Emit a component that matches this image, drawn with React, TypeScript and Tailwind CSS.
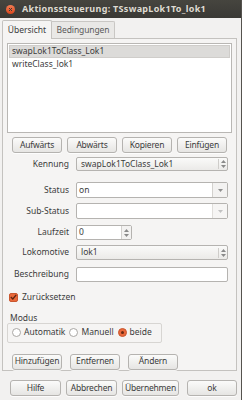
import React from 'react';

const font = { fontFamily: '"Noto Sans", "DejaVu Sans", sans-serif' };

function Btn({ label, w = 'w-[50px]' }: { label: string; w?: string }) {
  return (
    <div
      className={`${w} h-[16px] flex items-center justify-center rounded-[3px] border border-[#b5b3b0] bg-gradient-to-b from-[#fbfbfa] to-[#e6e5e3] text-[8.5px] tracking-[-0.2px] text-[#3c3c3c] shadow-[0_1px_0_rgba(255,255,255,0.8)] whitespace-nowrap`}
    >
      {label}
    </div>
  );
}

function UpDown() {
  return (
    <div className="flex flex-col items-center leading-none">
      <svg width="5" height="3" viewBox="0 0 5 3">
        <path d="M0 3 L2.5 0 L5 3 Z" fill="#8a8a8a" />
      </svg>
      <svg width="5" height="3" viewBox="0 0 5 3" className="mt-[2px]">
        <path d="M0 0 L2.5 3 L5 0 Z" fill="#8a8a8a" />
      </svg>
    </div>
  );
}

function Row({ label, children, mt }: { label: string; children: React.ReactNode; mt: string }) {
  return (
    <div className={`flex items-center ${mt}`}>
      <div className="w-[62px] text-right text-[8.5px] text-[#3c3c3c]">{label}</div>
      <div className="ml-[7px] flex-1 flex">{children}</div>
    </div>
  );
}

function Radio({ label, on }: { label: string; on?: boolean }) {
  return (
    <div className="flex items-center gap-[3px]">
      {on ? (
        <div className="w-[9px] h-[9px] rounded-full bg-[#e9683a] border border-[#c9572f] flex items-center justify-center">
          <div className="w-[3px] h-[3px] rounded-full bg-[#6a2a12]" />
        </div>
      ) : (
        <div className="w-[9px] h-[9px] rounded-full bg-white border border-[#a9a7a4]" />
      )}
      <span className="text-[8.5px] text-[#3c3c3c]">{label}</span>
    </div>
  );
}

export default function App() {
  return (
    <div className="w-[242px] h-[400px] bg-[#f2f1f0] flex flex-col overflow-hidden border-r border-[#55534f]" style={font}>
      {/* title bar */}
      <div className="h-[18px] bg-gradient-to-b from-[#46453f] to-[#3a3935] flex items-center pl-[6px]">
        <div className="w-[9px] h-[9px] rounded-full bg-gradient-to-b from-[#f37b51] to-[#d9461b] flex items-center justify-center">
          <svg width="5" height="5" viewBox="0 0 5 5">
            <path d="M1 1 L4 4 M4 1 L1 4" stroke="#3c3b37" strokeWidth="1" />
          </svg>
        </div>
        <span className="ml-[7px] text-[9px] font-bold text-[#dfdbd2] tracking-[0.3px]">Aktionssteuerung: TSswapLok1To_lok1</span>
      </div>

      {/* tabs */}
      <div className="flex items-end pl-[2px] mt-[1px] h-[19px]">
        <div className="h-[19px] w-[50px] border border-b-0 border-[#c4c2bf] rounded-t-[2px] bg-[#f5f4f3] flex items-center justify-center text-[8.5px] text-[#3c3c3c] relative z-10 -mb-px">
          Übersicht
        </div>
        <div className="h-[17px] w-[63px] border border-b-0 border-l-0 border-[#c9c7c4] rounded-tr-[2px] bg-[#e9e8e6] flex items-center justify-center text-[8.5px] tracking-[-0.1px] text-[#5a5a5a]">
          Bedingungen
        </div>
      </div>

      {/* tab pane */}
      <div className="mx-[2px] w-[235px] h-[333px] border border-[#c4c2bf] bg-[#f5f4f3] flex flex-col px-[4px] pt-[4px]">
        <div className="h-[90px] border border-[#b9b7b4] bg-white flex flex-col">
          <div className="h-[13px] mx-[1px] mt-[1px] bg-[#dcdbd9] border border-[#cfcdca] flex items-center pl-[2px] text-[8.5px] text-[#3c3c3c]">
            swapLok1ToClass_Lok1
          </div>
          <div className="h-[13px] flex items-center pl-[4px] text-[8.5px] text-[#3c3c3c]">writeClass_lok1</div>
        </div>

        <div className="flex gap-[5px] mt-[4px] pl-[5px]">
          <Btn label="Aufwärts" />
          <Btn label="Abwärts" />
          <Btn label="Kopieren" />
          <Btn label="Einfügen" />
        </div>

        <div className="pr-[4px]">
          <Row label="Kennung" mt="mt-[4px]">
            <div className="flex-1 h-[14px] rounded-[2px] border border-[#b5b3b0] bg-gradient-to-b from-[#fafaf9] to-[#ebeae8] flex items-center">
              <span className="flex-1 pl-[4px] text-[8.5px] text-[#3c3c3c]">swapLok1ToClass_Lok1</span>
              <div className="w-[9px] h-[10px] border-l border-[#cfcdca] flex items-center justify-center">
                <UpDown />
              </div>
            </div>
          </Row>
          <Row label="Status" mt="mt-[11px]">
            <div className="flex-1 h-[16px] rounded-[2px] border border-[#b5b3b0] bg-white flex items-center">
              <span className="flex-1 pl-[2px] text-[8.5px] text-[#3c3c3c]">on</span>
              <div className="w-[15px] h-full border-l border-[#d3d1ce] bg-[#f3f2f1] flex items-center justify-center">
                <svg width="5" height="3" viewBox="0 0 5 3">
                  <path d="M0 0 L2.5 3 L5 0 Z" fill="#8f8f8f" />
                </svg>
              </div>
            </div>
          </Row>
          <Row label="Sub-Status" mt="mt-[5px]">
            <div className="flex-1 h-[16px] rounded-[2px] border border-[#b5b3b0] bg-white flex items-center">
              <span className="flex-1" />
              <div className="w-[15px] h-full border-l border-[#e0dedb] bg-[#f6f5f4] flex items-center justify-center">
                <svg width="5" height="3" viewBox="0 0 5 3">
                  <path d="M0 0 L2.5 3 L5 0 Z" fill="#c2c2c2" />
                </svg>
              </div>
            </div>
          </Row>
          <Row label="Laufzeit" mt="mt-[6px]">
            <div className="w-[56px] h-[15px] rounded-[2px] border border-[#b5b3b0] bg-white flex items-center">
              <span className="flex-1 pl-[2px] text-[8.5px] text-[#3c3c3c]">0</span>
              <div className="w-[10px] h-full border-l border-[#d3d1ce] bg-[#f3f2f1] flex items-center justify-center">
                <UpDown />
              </div>
            </div>
          </Row>
          <Row label="Lokomotive" mt="mt-[5px]">
            <div className="flex-1 h-[15px] rounded-[2px] border border-[#b5b3b0] bg-gradient-to-b from-[#fafaf9] to-[#ebeae8] flex items-center">
              <span className="flex-1 pl-[4px] text-[8.5px] text-[#3c3c3c]">lok1</span>
              <div className="w-[9px] h-[10px] border-l border-[#cfcdca] flex items-center justify-center">
                <UpDown />
              </div>
            </div>
          </Row>
          <Row label="Beschreibung" mt="mt-[7px]">
            <div className="flex-1 h-[15px] rounded-[2px] border border-[#b5b3b0] bg-white" />
          </Row>
        </div>

        <div className="flex items-center mt-[9px] pl-[2px] gap-[4px]">
          <div className="w-[9px] h-[9px] rounded-[2px] bg-[#e9683a] border border-[#c9572f] flex items-center justify-center">
            <svg width="7" height="6" viewBox="0 0 7 6">
              <path d="M0.8 3 L2.8 5 L6.2 0.8" stroke="#5a2410" strokeWidth="1.3" fill="none" />
            </svg>
          </div>
          <span className="text-[8.5px] text-[#3c3c3c]">Zurücksetzen</span>
        </div>

        <div className="mt-[9px] text-[8.5px] text-[#3c3c3c] pl-[3px] leading-[9px]">Modus</div>
        <div className="w-[155px] h-[20px] mt-[1px] border border-[#d7d5d2] rounded-[2px] flex items-center pl-[4px] gap-[4px]">
          <Radio label="Automatik" />
          <Radio label="Manuell" />
          <Radio label="beide" on />
        </div>

        <div className="flex mt-[11px] pl-[5px] gap-[8px]">
          <Btn label="Hinzufügen" />
          <Btn label="Entfernen" />
          <Btn label="Ändern" />
        </div>
      </div>

      {/* dialog buttons */}
      <div className="flex mt-[9px] pl-[10px] gap-[5px]">
        <Btn label="Hilfe" w="w-[51px]" />
        <Btn label="Abbrechen" w="w-[51px]" />
        <Btn label="Übernehmen" w="w-[57px]" />
        <div className="ml-[3px]">
          <Btn label="ok" w="w-[50px]" />
        </div>
      </div>
    </div>
  );
}
